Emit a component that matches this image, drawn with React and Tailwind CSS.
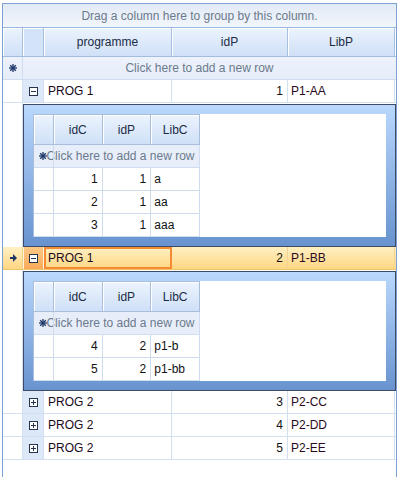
import React from "react";

const F = "font-['Liberation_Sans',Arial,sans-serif]";

function Box({ minus }) {
  return (
    <svg width="9" height="9" viewBox="0 0 9 9" className="block">
      <rect x="0.5" y="0.5" width="8" height="8" fill="#fff" stroke="#26354d" />
      <line x1="2" y1="4.5" x2="7" y2="4.5" stroke="#26354d" />
      {!minus && <line x1="4.5" y1="2" x2="4.5" y2="7" stroke="#26354d" />}
    </svg>
  );
}

function Star() {
  return (
    <svg width="8" height="8" viewBox="0 0 8 8" className="block">
      <g stroke="#1d3768" strokeWidth="1.3">
        <line x1="4" y1="0" x2="4" y2="8" />
        <line x1="0" y1="4" x2="8" y2="4" />
        <line x1="1.2" y1="1.2" x2="6.8" y2="6.8" />
        <line x1="6.8" y1="1.2" x2="1.2" y2="6.8" />
      </g>
    </svg>
  );
}

function Arrow() {
  return (
    <svg width="7" height="8" viewBox="0 0 7 8" className="block">
      <polygon points="0,3 3,3 3,0 7,4 3,8 3,5 0,5" fill="#1d3768" />
    </svg>
  );
}

const hdr =
  "bg-gradient-to-b from-[#ecf3fd] to-[#cfe0f7] border-r border-[#a8c0e0] shadow-[inset_1px_1px_0_#ffffff] flex items-center justify-center text-[#1b2b44]";

function MainHeader() {
  return (
    <div className="flex h-[29px] border-b border-[#a3bde0]">
      <div className={"w-[20px] " + hdr}></div>
      <div className="w-[21px] bg-[#d3e4f9] border-r border-[#a8c0e0] shadow-[inset_1px_1px_0_#ffffff]"></div>
      <div className={"w-[128px] " + hdr}>programme</div>
      <div className={"w-[116px] " + hdr}>idP</div>
      <div className={"w-[107px] " + hdr}>LibP</div>
    </div>
  );
}

function NewRow() {
  return (
    <div className="relative flex h-[23px] border-b border-[#d0ddf0] bg-gradient-to-b from-[#edf2fb] to-[#e5edf9]">
      <div className="w-[20px] border-r border-[#d0ddf0] flex items-center justify-center">
        <Star />
      </div>
      <div className="absolute inset-0 flex items-center justify-center text-[#6b7a8c]">
        Click here to add a new row
      </div>
    </div>
  );
}

function DataRow({ prog, id, lib, expanded, selected }) {
  if (selected) {
    return (
      <div className="flex h-[23px] border-b border-[#f0c46a] bg-gradient-to-b from-[#fff0c2] to-[#ffd682]">
        <div className="w-[20px] border-r border-[#f5cf86] flex items-center justify-center pl-[2px]">
          <Arrow />
        </div>
        <div className="w-[21px] bg-gradient-to-b from-[#fcc885] to-[#f8aa58] border-r border-[#fff4dc] shadow-[inset_1px_0_0_#fff4dc] flex items-center justify-center">
          <Box minus={expanded} />
        </div>
        <div className="w-[128px] border-2 border-[#f58a35] pl-[2px] flex items-center text-[#1a0a1a]">
          {prog}
        </div>
        <div className="w-[116px] border-r border-[#f3d494] pr-[4px] flex items-center justify-end text-[#111]">
          {id}
        </div>
        <div className="w-[107px] border-r border-[#f3d494] pl-[3px] flex items-center text-[#2a0a20]">
          {lib}
        </div>
      </div>
    );
  }
  return (
    <div className="flex h-[23px] border-b border-[#d3e0f2] bg-white">
      <div className="w-[20px] border-r border-[#d3e0f2]"></div>
      <div className="w-[21px] bg-[#dce8f8] border-r border-[#d3e0f2] flex items-center justify-center">
        <Box minus={expanded} />
      </div>
      <div className="w-[128px] border-r border-[#d3e0f2] pl-[4px] flex items-center text-[#1a0a1a]">
        {prog}
      </div>
      <div className="w-[116px] border-r border-[#d3e0f2] pr-[4px] flex items-center justify-end text-[#111]">
        {id}
      </div>
      <div className="w-[107px] border-r border-[#d3e0f2] pl-[3px] flex items-center text-[#2a0a20]">
        {lib}
      </div>
    </div>
  );
}

const nhdr =
  "bg-gradient-to-b from-[#ecf3fd] to-[#cfe0f7] border-r border-[#a9bedb] shadow-[inset_1px_1px_0_#ffffff] flex items-center justify-center text-[#1b2b44]";

function Detail({ rows }) {
  return (
    <div className="flex">
      <div className="w-[20px] border-r border-[#d3e0f2] bg-white"></div>
      <div className="flex-1 pt-px bg-white">
        <div className="border border-[#3d4b65] bg-gradient-to-b from-[#bad8fd] to-[#6893cf] p-[9px]">
          <div className="bg-white">
            <div className="w-[167px] border-l border-t border-[#a9bedb]">
              <div className="flex h-[30px] border-b border-[#a9bedb]">
                <div className={"w-[20px] " + nhdr}></div>
                <div className={"w-[49px] " + nhdr}>idC</div>
                <div className={"w-[49px] " + nhdr}>idP</div>
                <div className={"w-[49px] " + nhdr}>LibC</div>
              </div>
              <div className="relative flex h-[23px] border-b border-r border-[#d0ddf0] bg-[#e7eef9]">
                <div className="w-[20px] flex items-center justify-center pr-[2px]">
                  <Star />
                </div>
                <div className="absolute inset-0 flex items-center justify-center text-[#6b7a8c] pl-[8px]">
                  Click here to add a new row
                </div>
                <div className="absolute left-[19px] top-0 bottom-0 w-px bg-[#cfdcee]"></div>
              </div>
              {rows.map((r, i) => (
                <div key={i} className="flex h-[23px] border-b border-[#cfdcee]">
                  <div className="w-[20px] border-r border-[#cfdcee]"></div>
                  <div className="w-[49px] border-r border-[#cfdcee] pr-[4px] flex items-center justify-end text-[#111]">
                    {r[0]}
                  </div>
                  <div className="w-[49px] border-r border-[#cfdcee] pr-[4px] flex items-center justify-end text-[#111]">
                    {r[1]}
                  </div>
                  <div className="w-[49px] border-r border-[#cfdcee] pl-[3px] flex items-center text-[#111]">
                    {r[2]}
                  </div>
                </div>
              ))}
            </div>
          </div>
        </div>
      </div>
    </div>
  );
}

export default function App() {
  return (
    <div className={"w-[399px] h-[477px] bg-white overflow-hidden text-[12px] " + F}>
      <div className="ml-[2px] mt-[3px] w-[395px] h-[474px] border-l border-r border-t border-[#7ca0d4] bg-white">
        <div className="h-[24px] border-b border-[#9bb9e0] bg-gradient-to-b from-[#e2eaf6] to-[#f2f6fc] flex items-center justify-center text-[#6b7a8c]">
          Drag a column here to group by this column.
        </div>
        <MainHeader />
        <NewRow />
        <DataRow prog="PROG 1" id="1" lib="P1-AA" expanded />
        <Detail rows={[["1", "1", "a"], ["2", "1", "aa"], ["3", "1", "aaa"]]} />
        <DataRow prog="PROG 1" id="2" lib="P1-BB" expanded selected />
        <Detail rows={[["4", "2", "p1-b"], ["5", "2", "p1-bb"]]} />
        <DataRow prog="PROG 2" id="3" lib="P2-CC" />
        <DataRow prog="PROG 2" id="4" lib="P2-DD" />
        <DataRow prog="PROG 2" id="5" lib="P2-EE" />
      </div>
    </div>
  );
}
